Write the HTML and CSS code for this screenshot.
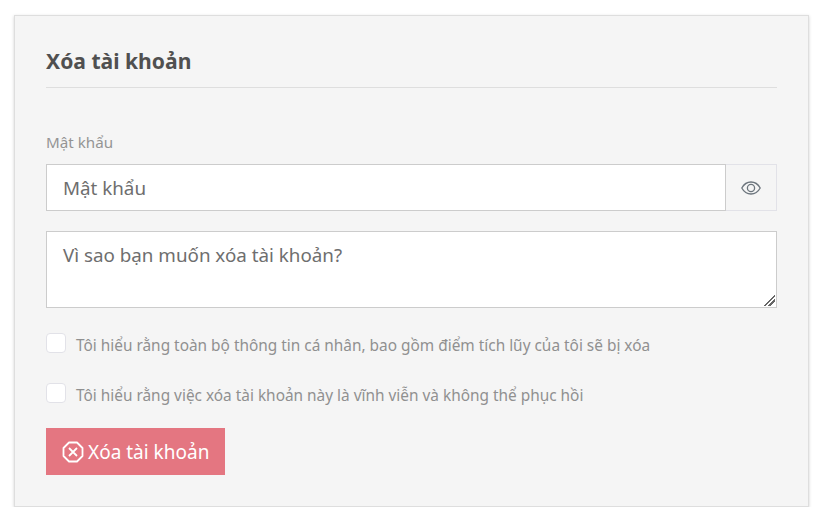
FILE: index.html
```html
<!DOCTYPE html>
<html lang="vi">

<head>
    <meta name="viewport" content="width=device-width, initial-scale=1.0">
    <title>Xóa tài khoản</title>
    <link rel="stylesheet" href="styles.css">
</head>

<body>
    <div class="card">
        <h2 class="card-title">Xóa tài khoản</h2>
        <form class="form">
            <label class="label" for="password">Mật khẩu</label>
            <div class="input-group">
                <input type="password" id="password" class="input" placeholder="Mật khẩu">
                <span class="addon">
                    <svg width="20" height="14" viewBox="0 0 20 14" fill="none" stroke="currentColor" stroke-width="1.3">
                        <path d="M0.8 7C3 3 6.2 1 10 1s7 2 9.2 6c-2.2 4-5.4 6-9.2 6S3 11 0.8 7z"/>
                        <circle cx="10" cy="7" r="3.6"/>
                    </svg>
                </span>
            </div>
            <textarea class="input textarea" rows="2" placeholder="Vì sao bạn muốn xóa tài khoản?"></textarea>
            <label class="check">
                <input type="checkbox" class="check-box">
                <span>Tôi hiểu rằng toàn bộ thông tin cá nhân, bao gồm điểm tích lũy của tôi sẽ bị xóa</span>
            </label>
            <label class="check">
                <input type="checkbox" class="check-box">
                <span>Tôi hiểu rằng việc xóa tài khoản này là vĩnh viễn và không thể phục hồi</span>
            </label>
            <button type="button" class="btn">
                <svg width="22" height="22" viewBox="0 0 22 22" fill="none" stroke="currentColor" stroke-width="1.8">
                    <path d="M7 1.5h8L20.500 7v8L15 20.500H7L1.500 15V7z" stroke-linejoin="round"/>
                    <path d="M7 7l8 8M15 7l-8 8"/>
                </svg>
                Xóa tài khoản
            </button>
        </form>
    </div>
</body>

</html>
```

FILE: styles.css
```css
* {
    box-sizing: border-box;
}

body {
    font-family: "Noto Sans", "Open Sans", sans-serif;
    background-color: #fff;
    margin: 0;
    padding: 15px 12px 0 14px;
    color: #555;
}

.card {
    background-color: #f5f5f5;
    border: 1px solid #dedede;
    box-shadow: 0 1px 3px rgba(0, 0, 0, 0.18);
    padding: 26px 31px 31px;
    height: 492px;
}

.card-title {
    margin: 0;
    height: 46px;
    font-size: 21.100px;
    line-height: 38px;
    font-weight: 700;
    color: #505050;
    border-bottom: 1px solid #dedede;
}

.form {
    display: flex;
    flex-direction: column;
    align-items: flex-start;
}

.label {
    margin-top: 42px;
    height: 24px;
    font-size: 15.200px;
    line-height: 24px;
    color: #949494;
}

.input-group {
    display: flex;
    width: 100%;
    height: 47px;
    margin-top: 10px;
}

.input {
    display: block;
    width: 100%;
    border: 1px solid #ccc;
    background-color: #fff;
    font-family: inherit;
    font-size: 18.800px;
    color: #555;
    padding: 0 16px;
    outline: none;
    border-radius: 0;
}

.input::placeholder {
    color: #6e6e6e;
    opacity: 1;
}

.addon {
    flex: none;
    width: 51px;
    display: flex;
    align-items: center;
    justify-content: center;
    border: 1px solid #e2e2e8;
    border-left: none;
    color: #6c757d;
}

.textarea {
    height: 77px;
    margin-top: 20px;
    padding: 9px 16px;
    line-height: 28px;
    resize: vertical;
}

.textarea::-webkit-resizer {
    background: linear-gradient(135deg, transparent 46%, #666 46% 56%, transparent 56% 68%, #666 68% 78%, transparent 78%) 3px 3px / 11px 11px no-repeat;
}

.check {
    display: flex;
    align-items: flex-start;
    height: 45px;
    font-size: 15.400px;
    line-height: 24px;
    color: #909090;
}

.textarea + .check {
    margin-top: 25px;
}

.check + .check {
    margin-top: 5px;
}

.check-box {
    appearance: none;
    flex: none;
    width: 20px;
    height: 20px;
    margin: 0 10px 0 0;
    background-color: #fff;
    border: 1px solid #e2e2e8;
    border-radius: 4px;
}

.check span {
    margin-top: 1px;
}

.btn {
    display: flex;
    align-items: center;
    gap: 4px;
    height: 47px;
    padding: 0 16px;
    background-color: #e47681;
    color: #fff;
    border: none;
    font-family: inherit;
    font-size: 19px;
}
```
